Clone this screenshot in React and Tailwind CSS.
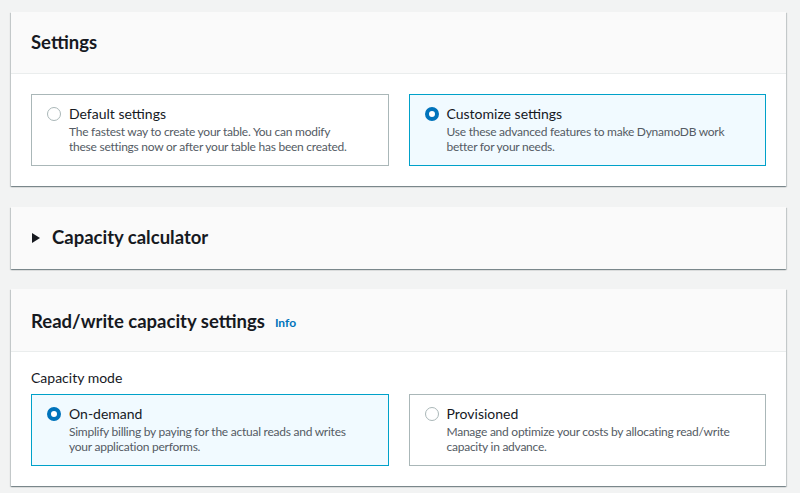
import React from "react";

const font = { fontFamily: 'Lato, "Open Sans", Arial, sans-serif' };

function Radio({ checked }) {
  return checked ? (
    <span className="mt-[3px] block h-[14px] w-[14px] shrink-0 rounded-full border-[4px] border-[#0073bb] bg-white" />
  ) : (
    <span className="mt-[3px] block h-[14px] w-[14px] shrink-0 rounded-full border border-[#aab7b8] bg-white" />
  );
}

function Option({ checked, title, desc }) {
  return (
    <div
      className={
        "flex h-[72px] gap-[8px] border px-[15px] pt-[9px] " +
        (checked ? "border-[#00a1c9] bg-[#f1faff]" : "border-[#aab7b8] bg-white")
      }
    >
      <Radio checked={checked} />
      <div className="flex flex-col whitespace-nowrap">
        <div className="text-[14px] leading-[20px] text-[#16191f]">{title}</div>
        <div className="text-[12px] leading-[15px] tracking-[-0.25px] text-[#545b64]">{desc}</div>
      </div>
    </div>
  );
}

const cardShadow =
  "shadow-[0_1px_1px_0_rgba(0,28,36,0.3),1px_1px_1px_0_rgba(0,28,36,0.15),-1px_1px_1px_0_rgba(0,28,36,0.15)]";

export default function App() {
  return (
    <div className="min-h-[493px] w-[800px] bg-[#f2f3f3] pl-[11px] pr-[14px] pt-[12px]" style={font}>
      <div className={"bg-white " + cardShadow}>
        <div className="flex h-[62px] items-center border-b border-[#eaeded] bg-[#fafafa] px-[20px]">
          <h2 className="text-[18.5px] font-bold text-[#16191f]">Settings</h2>
        </div>
        <div className="grid grid-cols-2 gap-[20px] px-[20px] pb-[20px] pt-[20px]">
          <Option
            checked={false}
            title="Default settings"
            desc={
              <>
                The fastest way to create your table. You can modify
                <br />
                these settings now or after your table has been created.
              </>
            }
          />
          <Option
            checked={true}
            title="Customize settings"
            desc={
              <>
                Use these advanced features to make DynamoDB work
                <br />
                better for your needs.
              </>
            }
          />
        </div>
      </div>

      <div className={"mt-[21px] flex h-[62px] items-center bg-[#fafafa] px-[21px] " + cardShadow}>
        <svg width="8" height="10" viewBox="0 0 8 10" className="mr-[12px]">
          <path d="M0 0 L8 5 L0 10 Z" fill="#16191f" />
        </svg>
        <h2 className="text-[18.5px] font-bold text-[#16191f]">Capacity calculator</h2>
      </div>

      <div className={"mt-[20px] bg-white " + cardShadow}>
        <div className="flex h-[63px] items-center border-b border-[#eaeded] bg-[#fafafa] px-[20px] pt-[3px]">
          <h2 className="text-[18.5px] font-bold text-[#16191f]">Read/write capacity settings</h2>
          <span className="ml-[10px] mt-[2px] text-[12px] font-bold text-[#0073bb]">Info</span>
        </div>
        <div className="px-[20px] pb-[20px] pt-[16px]">
          <div className="mb-[6px] text-[14px] leading-[20px] text-[#16191f]">Capacity mode</div>
          <div className="grid grid-cols-2 gap-[20px]">
            <Option
              checked={true}
              title="On-demand"
              desc={
                <>
                  Simplify billing by paying for the actual reads and writes
                  <br />
                  your application performs.
                </>
              }
            />
            <Option
              checked={false}
              title="Provisioned"
              desc={
                <>
                  Manage and optimize your costs by allocating read/write
                  <br />
                  capacity in advance.
                </>
              }
            />
          </div>
        </div>
      </div>
    </div>
  );
}
